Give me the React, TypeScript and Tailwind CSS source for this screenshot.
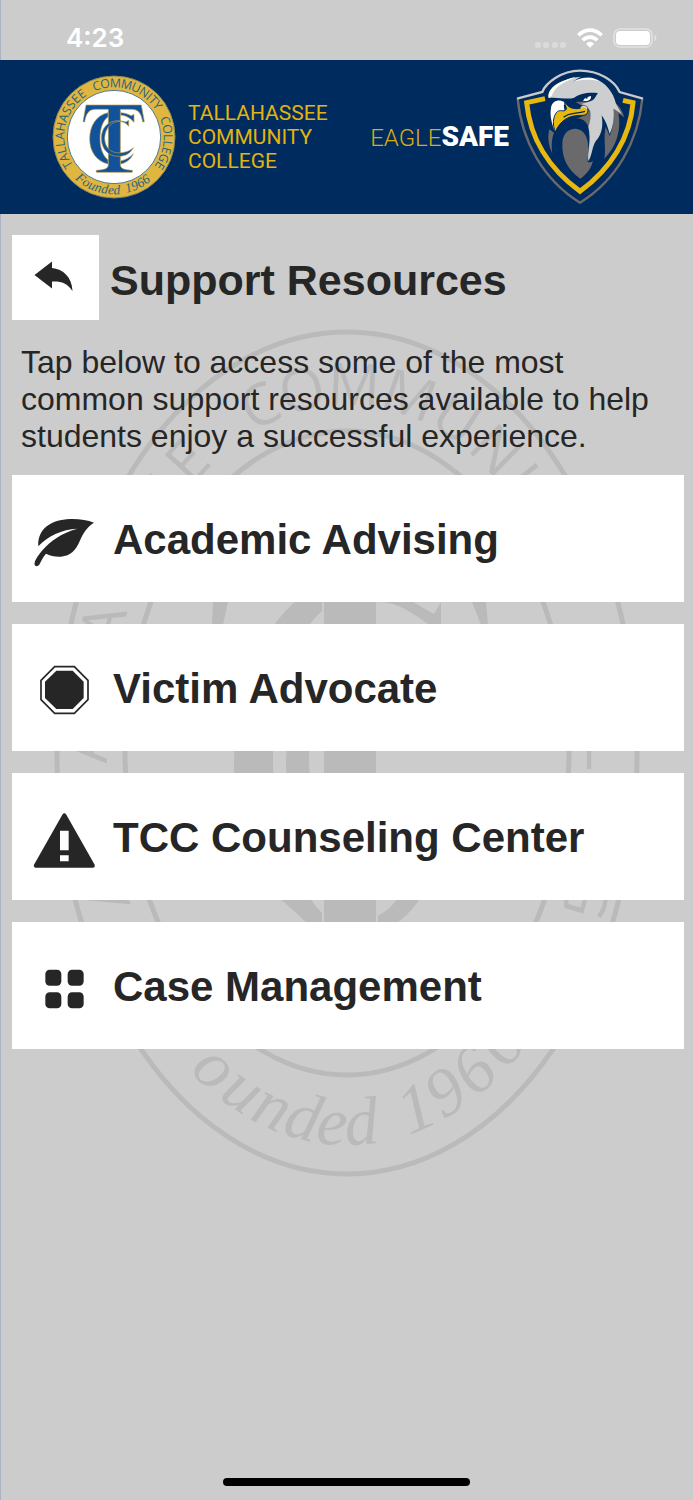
import * as React from 'react';

type RingTextProps = {
  text: string;
  rx: number;
  ry: number;
  size: number;
  from: number;
  to: number;
  family: string;
  fill: string;
  italic?: boolean;
  bottom?: boolean;
};

// rough advances in em, enough to space letters around a ring
const ADVANCE: Record<string, number> = {
  M: 0.9, N: 0.76, O: 0.78, U: 0.73, H: 0.74, G: 0.72, C: 0.63, A: 0.63, S: 0.55,
  T: 0.55, Y: 0.57, E: 0.56, L: 0.52, I: 0.28, F: 0.61, e: 0.44, ' ': 0.4,
};

const advance = (ch: string) => ADVANCE[ch] ?? 0.5;

// angles are degrees clockwise from the top of the ring, for the first and last letter
const RingText = ({ text, rx, ry, size, from, to, family, fill, italic, bottom }: RingTextProps) => {
  const chars = text.split('');
  const mids: number[] = [];
  let run = 0;
  chars.forEach((ch) => {
    mids.push(run + advance(ch) / 2);
    run += advance(ch);
  });
  const first = mids[0];
  const last = mids[mids.length - 1];
  const dir = bottom ? -1 : 1;

  const spots = chars.map((ch, i) => {
    const deg = from + ((mids[i] - first) / (last - first)) * (to - from);
    const a = (deg * Math.PI) / 180;
    const tx = dir * rx * Math.cos(a);
    const ty = dir * ry * Math.sin(a);
    const len = Math.hypot(tx, ty);
    const half = (advance(ch) * size) / 2;
    return {
      x: rx * Math.sin(a) - (tx / len) * half,
      y: -ry * Math.cos(a) - (ty / len) * half,
      r: (Math.atan2(ty, tx) * 180) / Math.PI,
    };
  });

  return (
    <text
      x={spots.map((s) => s.x.toFixed(1)).join(' ')}
      y={spots.map((s) => s.y.toFixed(1)).join(' ')}
      rotate={spots.map((s) => s.r.toFixed(1)).join(' ')}
      fontFamily={family}
      fontSize={size}
      fontStyle={italic ? 'italic' : 'normal'}
      fill={fill}
    >
      {text}
    </text>
  );
};

const SANS = '"Open Sans", "Noto Sans", sans-serif';
const SERIF = '"Liberation Serif", serif';

const Seal = () => (
  <svg viewBox="-186 -186 372 372" className="size-[124px] shrink-0" role="img" aria-label="College seal">
    <circle r="183" fill="#dfb63f" stroke="#8d8a5c" strokeWidth="3" />
    <circle r="140" fill="#fff" stroke="#4f7a8c" strokeWidth="3" />
    <RingText text="TALLAHASSEE" rx={149} ry={149} size={37} from={-121} to={-37} family={SANS} fill="#2b6480" />
    <RingText text="COMMUNITY" rx={149} ry={149} size={37} from={-19} to={54} family={SANS} fill="#2b6480" />
    <RingText text="COLLEGE" rx={149} ry={149} size={37} from={72} to={122} family={SANS} fill="#2b6480" />
    <RingText text="Founded 1966" rx={172} ry={172} size={40} from={-141} to={-217} family={SERIF} fill="#2b6480" italic bottom />
    <g fill="#11529a" stroke="#b9a048" strokeWidth="2">
      <path d="M-18 -73C-52 -66 -73 -35 -73 5S-52 72 -18 81V69C-34 56 -42 32 -42 4S-34 -49 -18 -61Z" />
      <path d="M20 -73C36 -72 44 -67 52 -64L60 -68V-44C50 -56 38 -64 20 -66ZM20 81C40 76 50 66 58 50C46 62 36 68 20 72Z" />
      <path d="M-84 -96H82L91 -46L86 -45C82 -70 74 -83 52 -83H19V82C19 96 30 98 55 100V106H-53V100C-28 98 -17 96 -17 82V-83H-54C-76 -83 -84 -70 -88 -45L-93 -46Z" />
      <path d="M44 -32V-50L36 -45C-6 -58 -38 -36 -38 4S-6 68 36 54C48 48 54 40 58 32C38 52 -26 62 -28 4C-26 -48 26 -60 44 -32Z" />
    </g>
  </svg>
);

const EagleShield = () => (
  <svg viewBox="30 20 390 414" className="h-[138px] w-[130px] shrink-0" role="img" aria-label="Eagle shield">
    <path d="M38 112C50 240 115 355 225 424C335 355 400 240 412 112" fill="none" stroke="#6a6a6c" strokeWidth="7" />
    <path
      d="M36 112L112 92C122 66 168 28 225 28C282 28 328 58 344 92L414 112"
      fill="none"
      stroke="#c9cacc"
      strokeWidth="7"
    />
    <path d="M120 112L65 124C75 230 132 322 225 390C318 322 376 228 384 124L354 117" fill="none" stroke="#e9b80e" strokeWidth="15" />
    {/* navy outline keeps the head clear of the shield */}
    <path d="M122 118C116 86 146 60 186 48C230 36 282 42 308 66C334 88 342 122 346 142L364 178L350 172C352 220 336 270 298 300Z" fill="#002b5e" />
    <path d="M133 204C126 232 132 256 142 276C139 250 140 232 147 214Z" fill="#6a6a6c" />
    <path d="M226 352C188 326 170 290 172 246C173 216 190 202 212 202C240 204 250 232 250 262L248 302C254 304 260 302 264 298C258 322 246 338 226 352Z" fill="#6a6a6c" />
    <path d="M326 120C342 132 352 148 358 168L340 156C350 204 334 258 298 292C304 262 294 232 302 196L314 224C326 200 328 160 326 120Z" fill="#6a6a6c" />
    <path d="M212 122L246 118L276 98L284 120L262 166L250 196C242 176 226 170 214 172L244 160L250 142L226 130Z" fill="#6a6a6c" />
    <path
      d="M131 110C126 88 150 66 182 56C196 50 212 47 228 46C216 52 208 58 204 62C220 50 250 44 270 52C300 62 326 92 333 128L350 158L326 142C328 172 324 196 314 218C308 196 302 178 290 162C296 200 288 222 272 240C262 254 262 280 250 300C246 272 260 240 250 196C256 180 258 168 256 150L246 134L228 128L250 122L268 110L278 95C250 92 224 96 208 109C184 116 158 106 131 110Z"
      fill="#cdced0"
    />
    <path d="M131 110C126 88 150 66 182 56C192 52 202 49 212 48C180 62 150 74 140 104ZM206 61C226 48 262 46 282 60C258 54 232 54 206 61Z" fill="#fffdf0" />
    <path d="M204 118C222 102 250 96 278 96L268 112C258 124 236 122 222 120Z" fill="#002b5e" />
    <path d="M234 118C238 110 246 106 258 104C260 114 250 120 240 119Z" fill="#fff" />
    <circle cx="245" cy="109" r="3" fill="#002b5e" />
    <path d="M138 140C140 118 162 112 178 122L182 150C166 158 152 184 151 212C140 190 134 162 138 140Z" fill="#fff" />
    <path
      d="M180 122C188 138 206 146 228 140C232 132 244 134 248 142C252 152 244 162 234 162C214 162 198 164 184 172C170 180 158 194 151 212C142 190 144 168 154 154C162 144 172 150 180 148Z"
      fill="#e9b80e"
      stroke="#002b5e"
      strokeWidth="3"
    />
    <path d="M176 168C190 154 212 158 240 150" fill="none" stroke="#002b5e" strokeWidth="4" />
    <path d="M228 142C230 134 242 134 246 142" fill="none" stroke="#cdced0" strokeWidth="5" />
    <ellipse cx="181" cy="138" rx="4" ry="9" fill="#002b5e" transform="rotate(-15 181 138)" />
  </svg>
);

// large grey seal that shows between the cards
const Watermark = () => (
  <svg
    viewBox="-293 -424 586 848"
    className="pointer-events-none absolute top-[115px] left-1/2 h-[848px] w-[586px] -translate-x-1/2"
    aria-hidden
  >
    <g fill="none" stroke="#bababa" strokeWidth="5">
      <ellipse rx="290" ry="421" />
      <ellipse rx="222" ry="322" />
    </g>
    <RingText text="TALLAHASSEE" rx={240} ry={348} size={58} from={-121} to={-37} family={SANS} fill="#bababa" />
    <RingText text="COMMUNITY" rx={240} ry={348} size={58} from={-19} to={54} family={SANS} fill="#bababa" />
    <RingText text="COLLEGE" rx={240} ry={348} size={58} from={72} to={122} family={SANS} fill="#bababa" />
    <RingText text="Founded 1966" rx={270} ry={392} size={68} from={-139} to={-219} family={SERIF} fill="#bababa" italic bottom />
    <g fill="#bababa">
      <path d="M-23 -190V172H29V-190Z" />
      <path d="M-25 -170C-82 -140 -113 -70 -113 10C-113 80 -90 130 -62 150L-40 170L-25 174V160C-58 124 -74 70 -74 6S-56 -114 -25 -142Z" />
      <path d="M-25 -70C-48 -50 -61 -20 -61 10S-48 60 -25 76V56C-34 40 -38 24 -38 8S-34 -34 -25 -46Z" />
      <path d="M32 -151C50 -151 66 -140 82 -128H94V-151L87 -139L66 -151Z" />
      <path d="M31 163C40 158 46 152 50 146H73C66 156 58 164 50 170H31Z" />
      <path d="M-134 -151H-119L-124 -128H-135ZM125 -151H139L141 -128H134Z" />
    </g>
  </svg>
);

const LeafIcon = () => (
  <svg viewBox="96 111 192 192" className="size-16 shrink-0" fill="#262626" aria-hidden>
    <path d="M282 158C262 150 236 146 210 147C154 149 112 176 115 229C142 198 186 178 232 176C184 190 152 212 128 240C116 254 106 268 104 278C101 290 114 292 119 282C125 270 130 260 138 251C150 257 166 261 183 260C212 258 228 240 239 214C248 192 260 172 282 158Z" />
  </svg>
);

const OctagonIcon = () => (
  <svg viewBox="96 558 192 192" className="size-16 shrink-0" fill="#262626" aria-hidden>
    <path d="M164 590H223L264 631V689L223 730H164L123 689V631Z" fill="none" stroke="#262626" strokeWidth="5" />
    <path d="M169 602H218L251 635V684L218 717H169L135 684V635Z" />
  </svg>
);

const WarningIcon = () => (
  <svg viewBox="96 163 192 192" className="size-16 shrink-0" fill="#262626" aria-hidden>
    <path
      fillRule="evenodd"
      d="M187 192Q193 184 199 192L284 342Q286 351 278 351H108Q100 351 102 342ZM180 240V299H206V240ZM180 314V332H206V314Z"
    />
  </svg>
);

const GridIcon = () => (
  <svg viewBox="96 611 192 192" className="size-16 shrink-0" fill="#262626" aria-hidden>
    <rect x="136" y="658" width="48" height="48" rx="13" />
    <rect x="203" y="658" width="48" height="48" rx="13" />
    <rect x="136" y="726" width="48" height="48" rx="13" />
    <rect x="203" y="726" width="48" height="48" rx="13" />
  </svg>
);

const RESOURCES = [
  { label: 'Academic Advising', Icon: LeafIcon },
  { label: 'Victim Advocate', Icon: OctagonIcon },
  { label: 'TCC Counseling Center', Icon: WarningIcon },
  { label: 'Case Management', Icon: GridIcon },
];

const StatusBar = () => (
  <div className="flex h-[60px] items-center justify-between pt-4 pr-9 pl-[66px]">
    <span className="font-['Inter',sans-serif] text-[26px] leading-8 font-semibold text-white">4:23</span>
    <div className="flex items-center gap-[10px]">
      <svg viewBox="0 0 32 20" className="h-5 w-8" fill="#dadada" aria-hidden>
        <rect x="0" y="14" width="6" height="6" rx="2" />
        <rect x="8" y="14" width="6" height="6" rx="2" />
        <rect x="17" y="14" width="6" height="6" rx="2" />
        <rect x="25" y="14" width="6" height="6" rx="2" />
      </svg>
      <svg viewBox="0 0 78 60" className="h-5 w-[26px]" fill="none" stroke="#fff" strokeWidth="11" aria-hidden>
        <path d="M4 22C24 1 54 1 74 22" />
        <path d="M17 37C29 24 49 24 61 37" />
        <path d="M27 47C34 39 44 39 51 47L39 59Z" fill="#fff" stroke="none" />
      </svg>
      <svg viewBox="0 0 44 20" className="h-5 w-11" aria-hidden>
        <rect x="1" y="1" width="38" height="18" rx="6" fill="none" stroke="#e2e2e2" strokeWidth="1.5" />
        <rect x="3" y="3" width="34" height="14" rx="4" fill="#fff" />
        <path d="M41.500 7C44 8 44 12 41.500 13Z" fill="#e2e2e2" />
      </svg>
    </div>
  </div>
);

const BrandHeader = () => (
  <header className="relative flex h-[154px] items-center justify-between bg-[#002b5e] pr-12 pl-[52px]">
    <div className="flex items-center gap-3">
      <Seal />
      <p className="font-['Roboto',sans-serif] text-[21px] leading-6 text-[#e3b40f]">
        TALLAHASSEE
        <br />
        COMMUNITY
        <br />
        COLLEGE
      </p>
    </div>
    <div className="flex items-center gap-[6px]">
      <p className="font-['Roboto',sans-serif] text-[28px] leading-8 whitespace-nowrap">
        <span className="text-[24px] font-light text-[#d9ad12]">EAGLE</span>
        <span className="font-black text-white">SAFE</span>
      </p>
      <EagleShield />
    </div>
  </header>
);

export default function App() {
  return (
    <div className="relative flex min-h-screen flex-col overflow-hidden bg-[#cccccc] font-['Liberation_Sans',Arial,sans-serif] text-[#262626]">
      <div className="absolute inset-y-0 left-0 w-px bg-[#abb2c1]" />
      <StatusBar />
      <BrandHeader />

      <main className="relative flex-1 pt-[21px] pr-[9px] pl-3">
        <Watermark />
        <div className="relative">
          <div className="flex items-center gap-[11px]">
            <button type="button" aria-label="Back" className="flex h-[85px] w-[87px] shrink-0 items-center justify-center bg-white">
              <svg viewBox="34 256 44 44" className="size-11" fill="#262626" aria-hidden>
                <path d="M34.500 275L52 261.500V268C63 269 72 277 72.500 291C67 283 61 281 52 281.500V288.500Z" />
              </svg>
            </button>
            <h1 className="pt-1 text-[43px] leading-[48px] font-bold">Support Resources</h1>
          </div>

          <p className="mt-6 pl-[9px] text-[32px] leading-[37px]">
            Tap below to access some of the most common support resources available to help students enjoy a
            successful experience.
          </p>

          <nav className="mt-5 flex flex-col gap-[22px]">
            {RESOURCES.map(({ label, Icon }) => (
              <a key={label} href="#" className="flex h-[127px] items-center gap-[17px] bg-white pl-5">
                <Icon />
                <span className="pt-[2px] text-[42px] leading-[48px] font-bold">{label}</span>
              </a>
            ))}
          </nav>
        </div>
      </main>

      <div className="mx-auto mb-[14px] h-2 w-[247px] rounded-full bg-black" />
    </div>
  );
}
